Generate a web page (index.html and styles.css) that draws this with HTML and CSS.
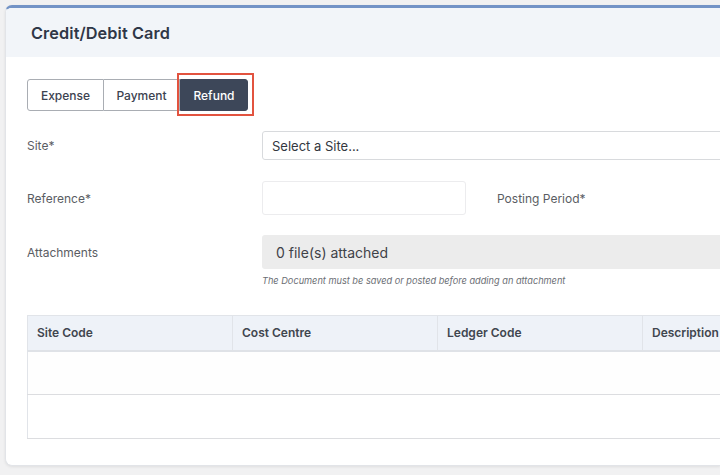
FILE: index.html
```html
<!DOCTYPE html>
<html>
<head>
<meta charset="utf-8">
<link rel="stylesheet" href="styles.css">
</head>
<body>
<div class="card">
  <div class="card-header"><h1 class="title">Credit/Debit Card</h1></div>
  <div class="card-body">
    <div class="toggle-row">
      <div class="btn-group">
        <button class="btn">Expense</button>
        <button class="btn">Payment</button>
        <span class="highlight"><button class="btn active">Refund</button></span>
      </div>
    </div>
    <div class="form-row row-site">
      <label class="label">Site*</label>
      <div class="select">Select a Site...</div>
    </div>
    <div class="form-row row-ref">
      <label class="label">Reference*</label>
      <div class="ref-group">
        <div class="input"></div>
        <span class="label period">Posting Period*</span>
      </div>
    </div>
    <div class="form-row row-att">
      <label class="label">Attachments</label>
      <div class="att-col">
        <div class="att-box">0 file(s) attached</div>
        <div class="note">The Document must be saved or posted before adding an attachment</div>
      </div>
    </div>
    <table class="grid">
      <thead>
        <tr><th>Site Code</th><th>Cost Centre</th><th>Ledger Code</th><th>Description</th></tr>
      </thead>
      <tbody>
        <tr><td></td><td></td><td></td><td></td></tr>
        <tr><td></td><td></td><td></td><td></td></tr>
      </tbody>
    </table>
  </div>
</div>
</body>
</html>
```
FILE: styles.css
```css
html, body {
  margin: 0;
  padding: 0;
  overflow: hidden;
  width: 720px;
  height: 475px;
  background: #f1f1f2;
  font-family: Inter, "Noto Sans", "Liberation Sans", sans-serif;
}
body {
  padding: 5px 0 0 5px;
  box-sizing: border-box;
}
.card {
  width: 715px;
  height: 461px;
  box-sizing: border-box;
  background: #fff;
  border-top: 3px solid #7393c6;
  border-left: 1px solid #e2e4e8;
  border-bottom: 1px solid #e2e4e8;
  border-radius: 7px 0 0 7px;
  box-shadow: 0 1px 3px rgba(0,0,0,0.08);
  overflow: hidden;
}
.card-header {
  height: 49px;
  background: #f2f5f9;
  display: flex;
  align-items: center;
  padding-left: 25px;
}
.title {
  margin: 0;
  font-size: 16.3px;
  font-weight: 600;
  color: #2f3747;
  letter-spacing: 0.1px;
}
.card-body {
  padding: 22px 0 0 21px;
}
.btn-group {
  display: flex;
  align-items: center;
  height: 32px;
}
.btn {
  font-family: inherit;
  font-size: 12px;
  font-weight: 500;
  color: #3c4250;
  background: #fff;
  border: 1px solid #a9adb3;
  height: 32px;
  margin: 0;
  padding: 0;
  box-sizing: border-box;
}
.btn:nth-child(1) { width: 77px; border-radius: 3px 0 0 3px; }
.btn:nth-child(2) { width: 76px; border-left: 0; }
.highlight {
  display: inline-flex;
  border: 2px solid #e2533f;
  padding: 4px 4px 3px 1px;
  margin: -6px 0 -5px -3px;
}
.btn.active {
  width: 68px;
  background: #3d4759;
  color: #fff;
  border-color: #3d4759;
  border-radius: 0 3px 3px 0;
}
.form-row {
  display: flex;
  align-items: center;
}
.label {
  width: 235px;
  flex: none;
  font-size: 12px;
  color: #5a5d63;
}
.row-site { margin-top: 20px; }
.select {
  width: 520px;
  flex: none;
  height: 29px;
  box-sizing: border-box;
  border: 1px solid #d8dadd;
  border-radius: 3px;
  padding-left: 9px;
  display: flex;
  align-items: center;
  font-size: 13px;
  color: #333740;
}
.row-ref { margin-top: 21px; }
.ref-group {
  display: flex;
  align-items: center;
}
.input {
  width: 204px;
  height: 34px;
  box-sizing: border-box;
  border: 1px solid #ececee;
  border-radius: 3px;
}
.label.period {
  width: auto;
  margin-left: 31px;
}
.row-att {
  margin-top: 20px;
  align-items: flex-start;
}
.row-att .label { margin-top: 10px; }
.att-col { flex: none; }
.att-box {
  width: 520px;
  height: 34px;
  box-sizing: border-box;
  background: #ececec;
  border-radius: 3px 0 0 3px;
  padding-left: 14px;
  display: flex;
  align-items: center;
  font-size: 14px;
  color: #3f4248;
}
.note {
  font-size: 9.2px;
  font-style: italic;
  color: #6b6e74;
  margin-top: 6px;
}
.grid {
  margin-top: 29px;
  border-collapse: collapse;
  table-layout: fixed;
  width: 820px;
}
.grid th, .grid td {
  width: 205px;
  box-sizing: border-box;
}
.grid th {
  height: 35px;
  background: #eef2f8;
  text-align: left;
  font-size: 12px;
  font-weight: 600;
  color: #41464f;
  padding: 0 0 0 9px;
  border: 1px solid #e1e4e9;
  border-bottom: 2px solid #dfe2e7;
}
.grid td {
  height: 44px;
  border-bottom: 1px solid #dcdde0;
  padding: 0;
}
.grid td:first-child { border-left: 1px solid #e1e4e9; }
.grid tbody tr:first-child td { background: #fefefe; }
```
